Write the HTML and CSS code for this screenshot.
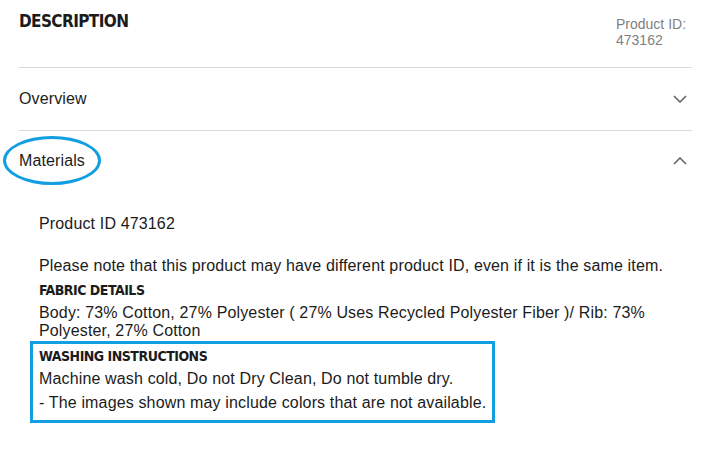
FILE: index.html
```html
<!DOCTYPE html>
<html lang="en">
<head>
<meta charset="utf-8">
<title>Description</title>
<link rel="stylesheet" href="styles.css">
</head>
<body>
<div class="page">
  <header class="head">
    <h2 class="title">DESCRIPTION</h2>
    <div class="pid">Product ID:<br>473162</div>
  </header>
  <div class="row">
    <span class="row-label">Overview</span>
    <svg class="chev" width="14" height="8" viewBox="0 0 14 8"><polyline points="1,1 7,7 13,1" fill="none" stroke="#666" stroke-width="1.6"/></svg>
  </div>
  <div class="row row-open">
    <span class="row-label">Materials</span>
    <span class="ring"></span>
    <svg class="chev" width="14" height="8" viewBox="0 0 14 8"><polyline points="1,7 7,1 13,7" fill="none" stroke="#666" stroke-width="1.6"/></svg>
  </div>
  <div class="content">
    <p class="line">Product ID 473162</p>
    <p class="line note">Please note that this product may have different product ID, even if it is the same item.</p>
    <h3 class="sub">FABRIC DETAILS</h3>
    <p class="line fabric">Body: 73% Cotton, 27% Polyester ( 27% Uses Recycled Polyester Fiber )/ Rib: 73% Polyester, 27% Cotton</p>
    <div class="wash">
      <h3 class="sub sub-wash">WASHING INSTRUCTIONS</h3>
      <p class="line wash-line">Machine wash cold, Do not Dry Clean, Do not tumble dry.</p>
      <p class="line wash-line">- The images shown may include colors that are not available.</p>
    </div>
  </div>
</div>
</body>
</html>
```

FILE: styles.css
```css
html, body {
  margin: 0;
  padding: 0;
  background: #fff;
}
body {
  font-family: "Liberation Sans", Arial, sans-serif;
  color: #1b1b1b;
}
.page {
  padding: 0 20px 0 19px;
}
.head {
  display: flex;
  justify-content: space-between;
  align-items: flex-start;
  height: 67px;
  border-bottom: 1px solid #dadada;
}
.title {
  margin: 11px 0 0;
  font-family: "DejaVu Sans Condensed", "DejaVu Sans", sans-serif;
  font-weight: bold;
  font-size: 17px;
  line-height: 20px;
  letter-spacing: -0.6px;
  color: #1b1b1b;
}
.pid {
  margin: 16px 4px 0 0;
  font-size: 14px;
  line-height: 16px;
  color: #7f7f7f;
  width: 72px;
}
.row {
  position: relative;
  display: flex;
  align-items: center;
  justify-content: space-between;
  height: 62px;
  border-bottom: 1px solid #dadada;
  font-size: 16px;
  letter-spacing: 0.12px;
}
.row-open {
  height: 59px;
  border-bottom: 0;
}
.row-label {
  color: #1b1b1b;
}
.chev {
  display: block;
  margin-right: 5px;
}
.ring {
  position: absolute;
  left: -16px;
  top: 5px;
  width: 98px;
  height: 49px;
  box-sizing: border-box;
  border: 3px solid #119fe2;
  border-radius: 50%;
}
.content {
  padding: 25px 0 0 20px;
}
.line {
  margin: 0;
  font-size: 16px;
  line-height: 18px;
  letter-spacing: 0.15px;
}
.note {
  margin-top: 24px;
}
.sub {
  margin: 6px 0 5px;
  font-family: "DejaVu Sans Condensed", "DejaVu Sans", sans-serif;
  font-weight: bold;
  font-size: 14px;
  line-height: 18px;
  letter-spacing: -0.5px;
  color: #1b1b1b;
}
.fabric {
  width: 650px;
}
.wash {
  box-sizing: border-box;
  width: 465px;
  margin: 1px 0 0 -9px;
  padding: 3px 6px 8px 6px;
  border: 3px solid #119fe2;
}
.sub-wash {
  margin: 0 0 5px;
}
.wash-line {
  white-space: nowrap;
}
.wash-line + .wash-line {
  margin-top: 6px;
}
```
